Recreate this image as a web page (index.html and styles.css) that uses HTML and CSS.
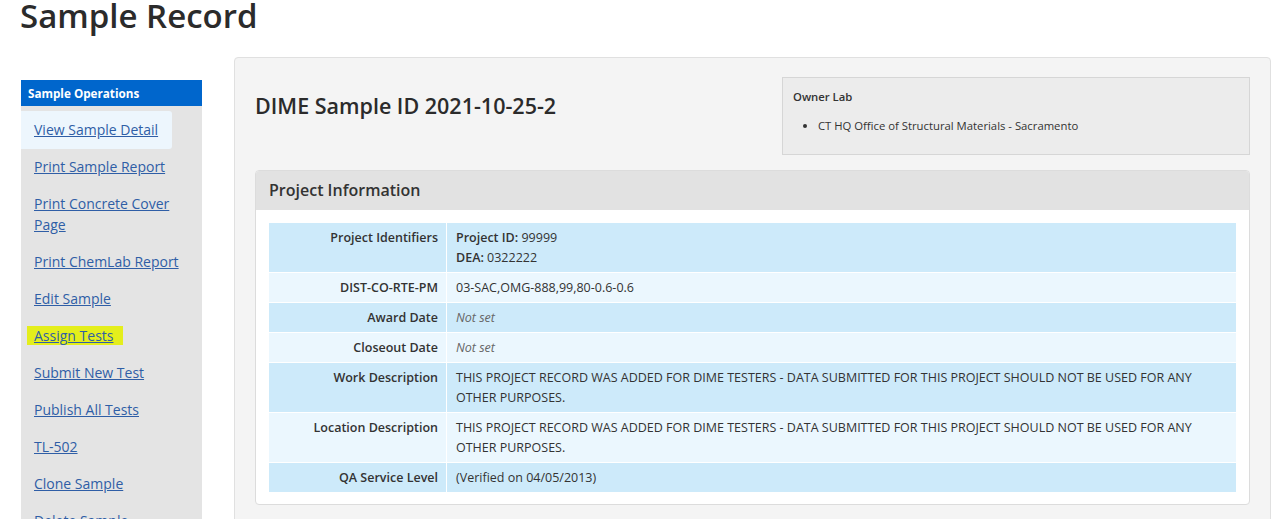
FILE: index.html
```html
<!DOCTYPE html>
<html lang="en">
<head>
    <meta charset="UTF-8">
    <meta name="viewport" content="width=device-width, initial-scale=1.0">
    <title>Sample Record</title>
    <link rel="stylesheet" href="styles.css">
</head>
<body>
    <h1 class="page-title">Sample Record</h1>
    <div class="layout">
        <div class="sidebar">
            <div class="sidebar-title">Sample Operations</div>
            <ul class="ops">
                <li class="active"><a href="#">View Sample Detail</a></li>
                <li><a href="#">Print Sample Report</a></li>
                <li><a href="#">Print Concrete Cover Page</a></li>
                <li><a href="#">Print ChemLab Report</a></li>
                <li><a href="#">Edit Sample</a></li>
                <li><span class="marked"><a href="#">Assign Tests</a></span></li>
                <li><a href="#">Submit New Test</a></li>
                <li><a href="#">Publish All Tests</a></li>
                <li><a href="#">TL-502</a></li>
                <li><a href="#">Clone Sample</a></li>
                <li><a href="#">Delete Sample</a></li>
            </ul>
        </div>
        <div class="main">
            <div class="top-row">
                <h2 class="sample-id">DIME Sample ID 2021-10-25-2</h2>
                <div class="owner-box">
                    <div class="owner-title">Owner Lab</div>
                    <ul>
                        <li>CT HQ Office of Structural Materials - Sacramento</li>
                    </ul>
                </div>
            </div>
            <div class="panel">
                <div class="panel-heading">Project Information</div>
                <div class="panel-body">
                    <table class="info">
                        <tr>
                            <th>Project Identifiers</th>
                            <td><b>Project ID:</b> 99999<br><b>DEA:</b> 0322222</td>
                        </tr>
                        <tr>
                            <th>DIST-CO-RTE-PM</th>
                            <td>03-SAC,OMG-888,99,80-0.6-0.6</td>
                        </tr>
                        <tr>
                            <th>Award Date</th>
                            <td><i>Not set</i></td>
                        </tr>
                        <tr>
                            <th>Closeout Date</th>
                            <td><i>Not set</i></td>
                        </tr>
                        <tr>
                            <th>Work Description</th>
                            <td>THIS PROJECT RECORD WAS ADDED FOR DIME TESTERS - DATA SUBMITTED FOR THIS PROJECT SHOULD NOT BE USED FOR ANY OTHER PURPOSES.</td>
                        </tr>
                        <tr>
                            <th>Location Description</th>
                            <td>THIS PROJECT RECORD WAS ADDED FOR DIME TESTERS - DATA SUBMITTED FOR THIS PROJECT SHOULD NOT BE USED FOR ANY OTHER PURPOSES.</td>
                        </tr>
                        <tr>
                            <th>QA Service Level</th>
                            <td>(Verified on 04/05/2013)</td>
                        </tr>
                    </table>
                </div>
            </div>
        </div>
    </div>
</body>
</html>
```

FILE: styles.css
```css
body {
    font-family: "Open Sans", "Liberation Sans", sans-serif;
    background-color: #fff;
    color: #333;
    margin: 0;
    padding: 0;
}

.page-title {
    font-size: 33px;
    line-height: 36px;
    font-weight: 600;
    color: #2b2b2b;
    margin: -2px 0 0 20px;
}

.layout {
    display: flex;
    align-items: flex-start;
    margin-top: 23px;
}

/* left menu */
.sidebar {
    width: 181px;
    margin: 23px 0 0 21px;
    background: #e4e4e4;
    flex-shrink: 0;
}

.sidebar-title {
    background: #0066cc;
    color: #fff;
    font-size: 11.7px;
    font-weight: 700;
    line-height: 26px;
    padding: 0 7px;
}

.ops {
    list-style-type: none;
    margin: 0;
    padding: 5px 0 40px 0;
}

.ops li {
    padding: 8px 0 8px 13px;
    font-size: 14px;
    line-height: 21px;
}

.ops li.active {
    margin-right: 30px;
    background: #edf6fd;
    border-radius: 0 3px 3px 0;
    padding: 8px 0 9px 13px;
    margin-bottom: -1px;
}

.ops a {
    color: #2f5ea6;
}

.ops .marked {
    background: #e4ee1c;
    padding: 0 10px 0 7px;
    margin-left: -7px;
}

/* main content */
.main {
    flex: 1;
    margin: 0 13px 0 32px;
    background: #f4f4f4;
    border: 1px solid #e0e0e0;
    border-radius: 4px;
    padding: 19px 20px 60px 20px;
}

.top-row {
    display: flex;
    justify-content: space-between;
    align-items: flex-start;
}

.sample-id {
    font-size: 21.5px;
    line-height: 30px;
    font-weight: 600;
    color: #2b2b2b;
    margin: 14px 0 0 0;
}

.owner-box {
    width: 446px;
    background: #ececec;
    border: 1px solid #d6d6d6;
    padding: 10px 10px 19px 10px;
    font-size: 11.3px;
}

.owner-title {
    font-weight: 600;
    line-height: 18px;
}

.owner-box ul {
    margin: 11px 0 0 0;
    padding-left: 25px;
    line-height: 18px;
}

.panel {
    margin-top: 15px;
    background: #fff;
    border: 1px solid #dcdcdc;
    border-radius: 4px;
}

.panel-heading {
    background: #e2e2e2;
    font-size: 16px;
    font-weight: 600;
    line-height: 39px;
    padding: 0 13px;
    border-radius: 3px 3px 0 0;
}

.panel-body {
    padding: 13px 13px 12px 13px;
}

.info {
    width: 100%;
    border-collapse: collapse;
    font-size: 12.5px;
    line-height: 20px;
}

.info tr {
    background: #cdeafa;
    border-bottom: 1px solid #fff;
}

.info tr:nth-child(even) {
    background: #ebf7fe;
}

.info tr:last-child {
    border-bottom: 0;
}

.info th {
    width: 160px;
    text-align: right;
    font-weight: 600;
    vertical-align: top;
    padding: 5px 8px 4px 9px;
    border-right: 1px solid #fff;
}

.info td {
    padding: 5px 10px 4px 9px;
    vertical-align: top;
}

.info td b {
    font-weight: 600;
}

.info td i {
    color: #666;
}
```
